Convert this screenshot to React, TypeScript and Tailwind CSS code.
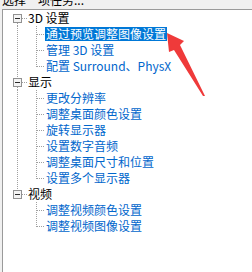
import React from 'react';

const tree = [
  { label: '3D 设置', children: ['通过预览调整图像设置', '管理 3D 设置', '配置 Surround、PhysX'] },
  {
    label: '显示',
    children: ['更改分辨率', '调整桌面颜色设置', '旋转显示器', '设置数字音频', '调整桌面尺寸和位置', '设置多个显示器'],
  },
  { label: '视频', children: ['调整视频颜色设置', '调整视频图像设置'] },
];

const selected = '通过预览调整图像设置';
const dot = '#a0a0a0';

function RootGutter({ first, last }: { first: boolean; last: boolean }) {
  return (
    <svg width="25" height="16" className="shrink-0" shapeRendering="crispEdges">
      {!first && <line x1="14.5" y1="0" x2="14.5" y2="4" stroke={dot} strokeDasharray="1 1" />}
      {!last && <line x1="14.5" y1="13" x2="14.5" y2="16" stroke={dot} strokeDasharray="1 1" />}
      <line x1="19" y1="8.5" x2="25" y2="8.5" stroke={dot} strokeDasharray="1 1" />
      <rect x="10.5" y="4.5" width="8" height="8" fill="#f4f4f4" stroke="#919191" />
      <line x1="12" y1="8.5" x2="17" y2="8.5" stroke="#2b2b2b" />
    </svg>
  );
}

function ChildGutter({ rootLast, last }: { rootLast: boolean; last: boolean }) {
  return (
    <svg width="42" height="16" className="shrink-0" shapeRendering="crispEdges">
      {!rootLast && <line x1="14.5" y1="0" x2="14.5" y2="16" stroke={dot} strokeDasharray="1 1" />}
      <line x1="33.5" y1="0" x2="33.5" y2={last ? 9 : 16} stroke={dot} strokeDasharray="1 1" />
      <line x1="34" y1="8.5" x2="42" y2="8.5" stroke={dot} strokeDasharray="1 1" />
    </svg>
  );
}

export default function App() {
  return (
    <div
      className="relative w-[252px] h-[272px] overflow-hidden bg-[#f0f0f0] flex flex-col text-[12px]"
      style={{ fontFamily: "'Noto Sans CJK SC', 'Noto Sans', sans-serif" }}
    >
      {/* Header, clipped */}
      <div className="h-[9px] overflow-hidden px-[2px] shrink-0">
        <div className="-mt-[7px] leading-[14px] text-black whitespace-nowrap">选择一项任务...</div>
      </div>

      {/* Tree panel */}
      <div className="flex-1 ml-[2px] border-l border-t border-[#9a9a9a] bg-white">
        {tree.map((node, i) => {
          const rootLast = i === tree.length - 1;
          return (
            <div key={node.label}>
              <div className="flex h-[16px] items-center">
                <RootGutter first={i === 0} last={rootLast} />
                <span className="leading-[16px] text-black whitespace-nowrap">{node.label}</span>
              </div>
              {node.children.map((c, j) => (
                <div key={c} className="flex h-[16px] items-start">
                  <ChildGutter rootLast={rootLast} last={j === node.children.length - 1} />
                  <span
                    className={`mt-px h-[14px] leading-[14px] px-px whitespace-nowrap ${
                      c === selected ? 'bg-[#0078d7] text-white' : 'text-[#0066cc]'
                    }`}
                  >
                    {c}
                  </span>
                </div>
              ))}
            </div>
          );
        })}
      </div>

      {/* Red annotation arrow */}
      <svg className="absolute left-0 top-0 pointer-events-none" width="252" height="272">
        <polygon points="167,33 184,41 180,45 205,96 203,96 174,50 169,52" fill="#ef3a3a" />
      </svg>
    </div>
  );
}
